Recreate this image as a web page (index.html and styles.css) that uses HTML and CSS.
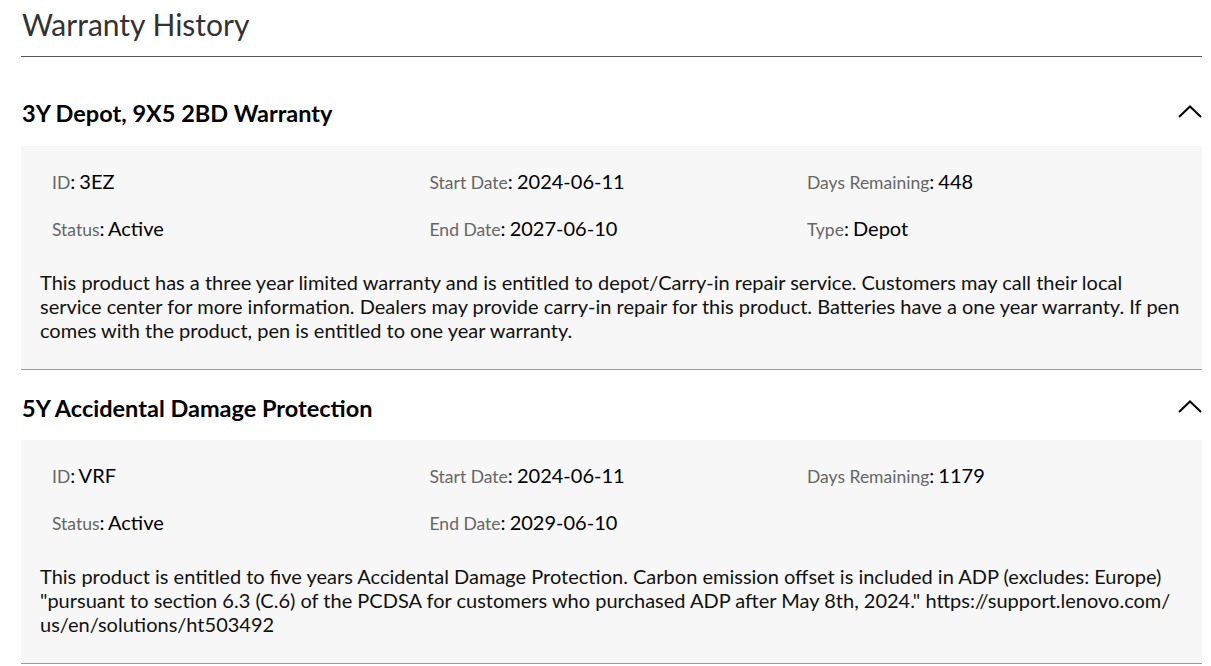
FILE: index.html
```html
<!DOCTYPE html>
<html lang="en">
<head>
<meta charset="utf-8">
<title>Warranty History</title>
<link rel="stylesheet" href="styles.css">
</head>
<body>
<main class="page">
  <h1 class="page-title">Warranty History</h1>

  <section class="warranty">
    <div class="warranty-head">
      <h2 class="warranty-name">3Y Depot, 9X5 2BD Warranty</h2>
      <svg class="chevron" width="24" height="13" viewBox="0 0 24 13" aria-hidden="true">
        <polyline points="1,12 12,1.5 23,12" fill="none" stroke="#000" stroke-width="2"/>
      </svg>
    </div>
    <div class="warranty-body">
      <div class="facts">
        <div class="fact"><span class="label">ID</span>: 3EZ</div>
        <div class="fact"><span class="label">Start Date</span>: 2024-06-11</div>
        <div class="fact"><span class="label">Days Remaining</span>: 448</div>
        <div class="fact"><span class="label">Status</span>: Active</div>
        <div class="fact"><span class="label">End Date</span>: 2027-06-10</div>
        <div class="fact"><span class="label">Type</span>: Depot</div>
      </div>
      <p class="desc">This product has a three year limited warranty and is entitled to depot/Carry-in repair service. Customers may call their local service center for more information. Dealers may provide carry-in repair for this product. Batteries have a one year warranty. If pen comes with the product, pen is entitled to one year warranty.</p>
    </div>
  </section>

  <section class="warranty">
    <div class="warranty-head">
      <h2 class="warranty-name">5Y Accidental Damage Protection</h2>
      <svg class="chevron" width="24" height="13" viewBox="0 0 24 13" aria-hidden="true">
        <polyline points="1,12 12,1.5 23,12" fill="none" stroke="#000" stroke-width="2"/>
      </svg>
    </div>
    <div class="warranty-body">
      <div class="facts">
        <div class="fact"><span class="label">ID</span>: VRF</div>
        <div class="fact"><span class="label">Start Date</span>: 2024-06-11</div>
        <div class="fact"><span class="label">Days Remaining</span>: 1179</div>
        <div class="fact"><span class="label">Status</span>: Active</div>
        <div class="fact"><span class="label">End Date</span>: 2029-06-10</div>
      </div>
      <p class="desc">This product is entitled to five years Accidental Damage Protection. Carbon emission offset is included in ADP (excludes: Europe) "pursuant to section 6.3 (C.6) of the PCDSA for customers who purchased ADP after May 8th, 2024." https://support.lenovo.com/<wbr>us/en/solutions/ht503492</p>
    </div>
  </section>
</main>
</body>
</html>
```

FILE: styles.css
```css
html, body {
  margin: 0;
  padding: 0;
  background: #fff;
}

body {
  font-family: Lato, "Liberation Sans", sans-serif;
  color: #000;
}

.page {
  padding: 0 9px 0 21px;
}

.page-title {
  margin: 0 0 19px;
  padding: 6px 0 14px 1px;
  font-size: 30px;
  line-height: 36px;
  font-weight: 400;
  color: #333;
  border-bottom: 1px solid #555;
}

.warranty-head {
  display: flex;
  align-items: center;
  justify-content: space-between;
  padding: 22px 0 18px;
}

.warranty + .warranty .warranty-head {
  padding-top: 23px;
  padding-bottom: 17px;
}

.warranty-name {
  margin: 0;
  padding-left: 1px;
  font-size: 23.5px;
  line-height: 30px;
  font-weight: 700;
}

.chevron {
  display: block;
  margin-top: -4px;
}

.warranty-body {
  background: #f7f7f7;
  border-bottom: 1px solid #999;
  padding: 22px 19px 27px;
}

.facts {
  display: grid;
  grid-template-columns: repeat(3, 377.5px);
  row-gap: 21px;
  padding-left: 12px;
}

.fact {
  font-size: 20px;
  line-height: 26px;
  word-spacing: -1px;
}

.label {
  font-size: 17.5px;
  line-height: 1;
  color: #666;
  word-spacing: 0;
}

.desc {
  margin: 29px 0 0;
  font-size: 20px;
  line-height: 24px;
  color: #111;
}
```
